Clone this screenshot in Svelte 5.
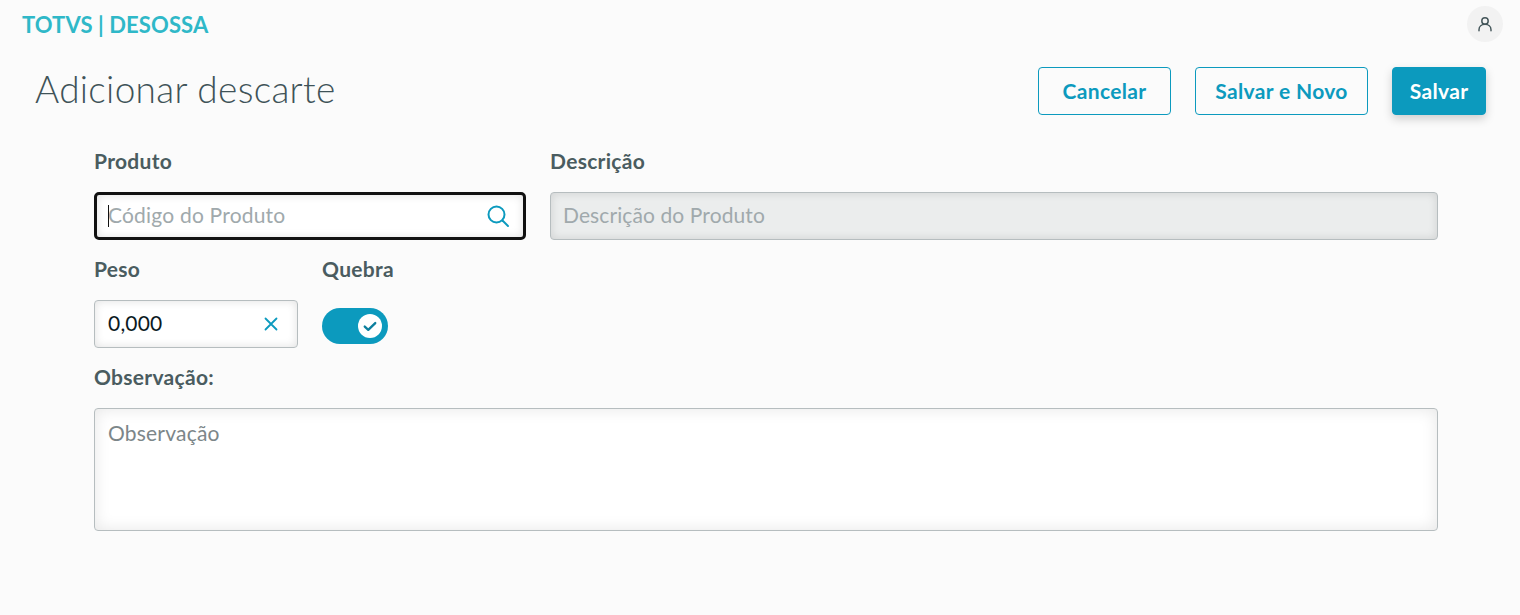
<script lang="ts">
	let quebra = $state(true);
	let peso = $state('0,000');
</script>

<div class="page">
	<header class="topbar">
		<span class="brand">TOTVS | DESOSSA</span>
		<button class="avatar" aria-label="Usuário">
			<svg viewBox="0 0 24 24" width="16" height="16" fill="none" stroke="#44565a" stroke-width="2.200" stroke-linecap="round">
				<circle cx="12" cy="7.500" r="4.800" />
				<path d="M3 22v-1.500C3 15.500 7 12.500 12 12.500s9 3 9 8V22" />
			</svg>
		</button>
	</header>

	<div class="head">
		<h1>Adicionar descarte</h1>
		<div class="actions">
			<button class="btn cancel">Cancelar</button>
			<button class="btn novo">Salvar e Novo</button>
			<button class="btn primary">Salvar</button>
		</div>
	</div>

	<form class="form">
		<div class="field col-4">
			<span class="label">Produto</span>
			<div class="box focused">
				<i class="caret"></i>
				<input placeholder="Código do Produto" />
				<svg class="icon search" viewBox="0 0 24 24" width="24" height="24" fill="none" stroke="#0c9abe" stroke-width="2" stroke-linecap="round">
					<circle cx="10.500" cy="10.500" r="8" />
					<path d="M16.500 16.500l5.500 5.500" />
				</svg>
			</div>
		</div>
		<div class="field col-8">
			<span class="label">Descrição</span>
			<div class="box disabled">
				<input placeholder="Descrição do Produto" disabled />
			</div>
		</div>
		<div class="field col-2">
			<span class="label">Peso</span>
			<div class="box">
				<input bind:value={peso} />
				<svg class="icon clear" viewBox="0 0 14 14" width="14" height="14" fill="none" stroke="#0c9abe" stroke-width="1.800" stroke-linecap="round">
					<path d="M1.500 1.500l11 11M12.500 1.500l-11 11" />
				</svg>
			</div>
		</div>
		<div class="field col-2">
			<span class="label">Quebra</span>
			<button type="button" class="switch" aria-label="Quebra" onclick={() => (quebra = !quebra)}>
				<span class="knob">
					<svg viewBox="0 0 24 24" width="14" height="14" fill="none" stroke="#0c7f9e" stroke-width="4" stroke-linecap="round" stroke-linejoin="round">
						<path d="M3 13l6 5.500L21 7" />
					</svg>
				</span>
			</button>
		</div>
		<div class="field col-12">
			<span class="label">Observação:</span>
			<textarea class="area" placeholder="Observação"></textarea>
		</div>
	</form>
</div>

<style>
	:global(body) {
		margin: 0;
		background: #fbfbfb;
	}
	.page {
		height: 615px;
		overflow: hidden;
		background: #fbfbfb;
		font-family: 'Lato', 'Open Sans', sans-serif;
		color: #4a5c60;
	}

	.topbar {
		display: flex;
		justify-content: space-between;
		align-items: center;
		height: 36px;
		padding: 6px 17px 0 22px;
	}
	.brand {
		font-size: 22px;
		font-weight: 700;
		letter-spacing: 0.1px;
		color: #2fb8c8;
	}
	.avatar {
		display: flex;
		align-items: center;
		justify-content: center;
		width: 36px;
		height: 36px;
		padding: 0;
		border: none;
		border-radius: 50%;
		background: #f2f2f2;
	}

	.head {
		display: flex;
		justify-content: space-between;
		align-items: center;
		height: 48px;
		margin-top: 25px;
		padding: 0 34px 0 35px;
	}
	h1 {
		margin: -6px 0 0;
		font-size: 37px;
		font-weight: 300;
		letter-spacing: 0.3px;
		color: #3f5358;
	}
	.actions {
		display: flex;
		gap: 24px;
	}
	.btn {
		height: 48px;
		padding: 0 0 2px;
		border: 1px solid #0c9abe;
		border-radius: 4px;
		background: transparent;
		color: #0c9abe;
		font-family: inherit;
		font-size: 21px;
		font-weight: 700;
		letter-spacing: 0.35px;
	}
	.cancel {
		width: 133px;
	}
	.novo {
		width: 173px;
	}
	.primary {
		width: 94px;
		background: #0c9abe;
		color: #fff;
		box-shadow: 0 4px 10px rgba(0, 0, 0, 0.18);
	}

	.form {
		display: grid;
		grid-template-columns: repeat(12, 1fr);
		column-gap: 24px;
		row-gap: 18px;
		width: 1344px;
		margin: 35px 0 0 94px;
	}
	.field {
		display: flex;
		flex-direction: column;
		min-width: 0;
	}
	.col-2 {
		grid-column: span 2;
	}
	.col-4 {
		grid-column: span 4;
	}
	.col-8 {
		grid-column: span 8;
	}
	.col-12 {
		grid-column: span 12;
	}
	.label {
		height: 24px;
		margin-bottom: 18px;
		font-size: 21px;
		font-weight: 700;
		line-height: 22px;
		letter-spacing: 0.3px;
		color: #4a5c60;
	}
	.box {
		position: relative;
		display: flex;
		align-items: center;
		box-sizing: border-box;
		height: 48px;
		padding: 0 13px;
		border: 1px solid #b6bdbf;
		border-radius: 4px;
		background: #fff;
		box-shadow: inset 0 0 10px rgba(0, 0, 0, 0.12);
	}
	.box input {
		flex: 1;
		min-width: 0;
		height: 28px;
		padding: 0 0 4px;
		box-sizing: border-box;
		border: none;
		outline: none;
		background: transparent;
		font-family: inherit;
		font-size: 21px;
		letter-spacing: 0.2px;
		color: #0b1a1f;
	}
	.box input::placeholder {
		color: #a0a9ac;
		opacity: 1;
	}
	.focused {
		border: 3px solid #111;
		border-radius: 5px;
		padding: 0 11px;
	}
	.caret {
		position: absolute;
		left: 11px;
		top: 10px;
		width: 1px;
		height: 22px;
		background: #111;
	}
	.disabled {
		padding: 0 12px;
		background: #ebeded;
	}
	.disabled input {
		letter-spacing: 0.1px;
	}
	.icon {
		flex: none;
	}
	.search {
		margin-right: 2px;
	}
	.clear {
		margin-right: 6px;
	}

	.switch {
		position: relative;
		width: 66px;
		height: 36px;
		margin-top: 8px;
		padding: 0;
		border: none;
		border-radius: 18px;
		background: #0c9abe;
	}
	.knob {
		position: absolute;
		top: 6px;
		right: 6px;
		display: flex;
		align-items: center;
		justify-content: center;
		width: 24px;
		height: 24px;
		border-radius: 50%;
		background: #fff;
	}

	.area {
		display: block;
		box-sizing: border-box;
		width: 100%;
		height: 123px;
		padding: 11px 13px;
		border: 1px solid #b6bdbf;
		border-radius: 4px;
		outline: none;
		resize: none;
		background: #fff;
		box-shadow: inset 0 0 16px rgba(0, 0, 0, 0.1);
		font-family: inherit;
		font-size: 21px;
		letter-spacing: 0.2px;
		line-height: 26px;
	}
	.area::placeholder {
		color: #7c8689;
		opacity: 1;
	}
</style>
